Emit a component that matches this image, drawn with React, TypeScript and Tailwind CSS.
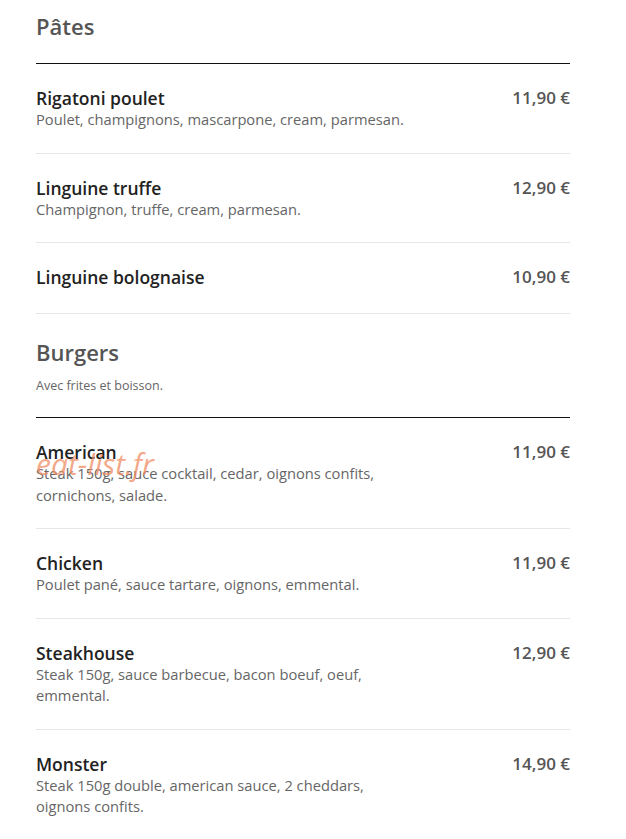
const sections = [
  {
    title: 'Pâtes',
    note: '',
    items: [
      { name: 'Rigatoni poulet', desc: 'Poulet, champignons, mascarpone, cream, parmesan.', price: '11,90 €' },
      { name: 'Linguine truffe', desc: 'Champignon, truffe, cream, parmesan.', price: '12,90 €' },
      { name: 'Linguine bolognaise', desc: '', price: '10,90 €' },
    ],
  },
  {
    title: 'Burgers',
    note: 'Avec frites et boisson.',
    items: [
      { name: 'American', desc: 'Steak 150g, sauce cocktail, cedar, oignons confits, cornichons, salade.', price: '11,90 €' },
      { name: 'Chicken', desc: 'Poulet pané, sauce tartare, oignons, emmental.', price: '11,90 €' },
      { name: 'Steakhouse', desc: 'Steak 150g, sauce barbecue, bacon boeuf, oeuf, emmental.', price: '12,90 €' },
      { name: 'Monster', desc: 'Steak 150g double, american sauce, 2 cheddars, oignons confits.', price: '14,90 €' },
    ],
  },
];

export default function App(): React.ReactElement {
  return (
    <div className="min-h-[839px] w-full bg-white font-['Open_Sans',sans-serif]">
      <div className="ml-[36px] w-[534px] pt-[11px]">
        {sections.map((section, si) => (
          <section key={section.title} className={si > 0 ? 'mt-[23px]' : ''}>
            <h2 className="text-[22px] leading-[30px] font-semibold text-[#555]">{section.title}</h2>
            {section.note ? (
              <p className="mt-[10px] text-[12.5px] leading-[18px] text-[#666]">{section.note}</p>
            ) : null}
            <div className={`${section.note ? 'mt-[22px]' : 'mt-[22px]'} border-t border-[#111]`}>
              {section.items.map((item) => (
                <div
                  key={item.name}
                  className={`relative flex items-start justify-between border-b border-[#e6e6e6] pt-[23px] ${item.desc ? 'pb-[22px]' : 'pb-[25px]'}`}
                >
                  <div>
                    <div className="text-[17.5px] leading-[22px] font-semibold text-[#222]">{item.name}</div>
                    {item.desc ? (
                      <div className="w-[380px] text-[14.7px] leading-[21.5px] text-[#666]">{item.desc}</div>
                    ) : null}
                  </div>
                  <div className="text-[17px] leading-[22px] font-semibold text-[#555]">{item.price}</div>
                  {item.name === 'American' ? (
                    <span className="pointer-events-none absolute top-[29px] left-0 text-[30px] leading-[34px] italic text-[#f08c62]/75">
                      eat-list.fr
                    </span>
                  ) : null}
                </div>
              ))}
            </div>
          </section>
        ))}
      </div>
    </div>
  );
}
